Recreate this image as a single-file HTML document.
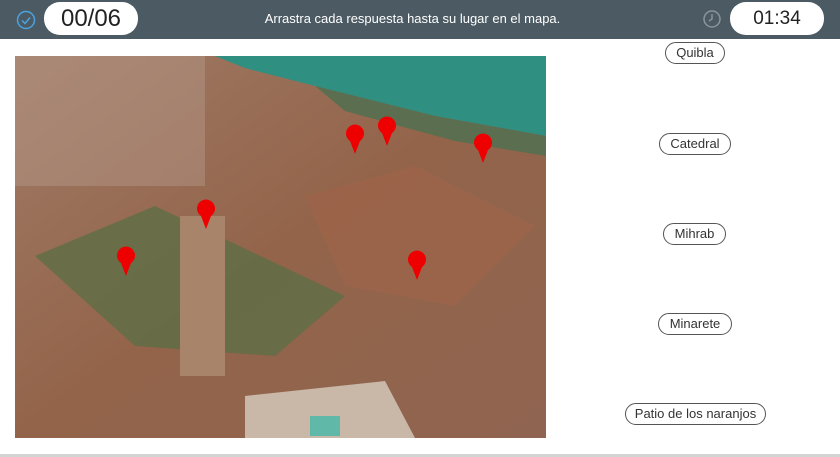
<!DOCTYPE html>
<html><head><style>
body{margin:0;width:840px;height:457px;position:relative;background:#fff;font-family:"Liberation Sans",sans-serif;overflow:hidden}
.hdr{position:absolute;left:0;top:0;width:840px;height:39px;background:#4b5a63}
.pill{position:absolute;background:#fff;border-radius:16px;text-align:center;color:#222}
.lbl{position:absolute;border:1px solid #555;border-radius:11px;font-size:13px;color:#333;text-align:center;box-sizing:border-box;background:#fff}
.pin{position:absolute;width:20px;height:30px}
</style></head><body>
<div class="hdr">
<svg style="position:absolute;left:16px;top:10px" width="20" height="20"><circle cx="10" cy="10" r="8.5" fill="none" stroke="#4aa3df" stroke-width="1.5"/><path d="M6 10.5l3 3 5-6" fill="none" stroke="#4aa3df" stroke-width="1.5"/></svg>
<div class="pill" style="left:44px;top:2px;width:94px;height:33px;line-height:33px;font-size:24px">00/06</div>
<div style="position:absolute;left:0;width:825px;top:11px;text-align:center;color:#fff;font-size:13px">Arrastra cada respuesta hasta su lugar en el mapa.</div>
<svg style="position:absolute;left:702px;top:9px" width="20" height="20"><circle cx="10" cy="10" r="8" fill="none" stroke="#8a959c" stroke-width="1.5"/><path d="M10 5v5l-3 2" fill="none" stroke="#8a959c" stroke-width="1.5"/></svg>
<div class="pill" style="left:730px;top:2px;width:94px;height:33px;line-height:33px;font-size:19px">01:34</div>
</div>
<svg style="position:absolute;left:15px;top:56px" width="531" height="382" viewBox="0 0 531 382">
<defs><linearGradient id="g" x1="0" y1="0" x2="1" y2="1"><stop offset="0" stop-color="#a07a66"/><stop offset=".5" stop-color="#93644a"/><stop offset="1" stop-color="#8f6450"/></linearGradient></defs>
<rect width="531" height="382" fill="url(#g)"/>
<polygon points="200,0 531,0 531,80 420,60 300,30 230,12" fill="#2f8f80"/>
<polygon points="300,30 420,60 531,80 531,100 440,85 330,55" fill="#5b6e50"/>
<rect x="0" y="0" width="190" height="130" fill="#b8a090" opacity=".4"/>
<polygon points="20,200 140,150 330,240 260,300 120,290" fill="#5a6f45" opacity=".75"/>
<polygon points="290,140 400,110 520,170 440,250 330,230" fill="#a0644a" opacity=".6"/>
<rect x="165" y="160" width="45" height="160" fill="#a8846a"/>
<polygon points="230,340 370,325 400,382 230,382" fill="#c9b8a8"/>
<rect x="295" y="360" width="30" height="20" fill="#5fb8a8"/>
</svg>
<svg class="pin" style="left:116px;top:246px" viewBox="0 0 20 30"><path d="M10 30L5 17A9 9 0 1 1 15 17Z" fill="#e00"/></svg>
<svg class="pin" style="left:196px;top:199px" viewBox="0 0 20 30"><path d="M10 30L5 17A9 9 0 1 1 15 17Z" fill="#e00"/></svg>
<svg class="pin" style="left:345px;top:124px" viewBox="0 0 20 30"><path d="M10 30L5 17A9 9 0 1 1 15 17Z" fill="#e00"/></svg>
<svg class="pin" style="left:377px;top:116px" viewBox="0 0 20 30"><path d="M10 30L5 17A9 9 0 1 1 15 17Z" fill="#e00"/></svg>
<svg class="pin" style="left:473px;top:133px" viewBox="0 0 20 30"><path d="M10 30L5 17A9 9 0 1 1 15 17Z" fill="#e00"/></svg>
<svg class="pin" style="left:407px;top:250px" viewBox="0 0 20 30"><path d="M10 30L5 17A9 9 0 1 1 15 17Z" fill="#e00"/></svg>
<div class="lbl" style="left:665px;top:42px;width:60px;height:22px;line-height:20px">Quibla</div>
<div class="lbl" style="left:659px;top:133px;width:72px;height:22px;line-height:20px">Catedral</div>
<div class="lbl" style="left:663px;top:223px;width:63px;height:22px;line-height:20px">Mihrab</div>
<div class="lbl" style="left:658px;top:313px;width:74px;height:22px;line-height:20px">Minarete</div>
<div class="lbl" style="left:625px;top:403px;width:141px;height:22px;line-height:20px">Patio de los naranjos</div>
<div style="position:absolute;left:0;top:454px;width:840px;height:3px;background:#d4d4d4"></div>
</body></html>
